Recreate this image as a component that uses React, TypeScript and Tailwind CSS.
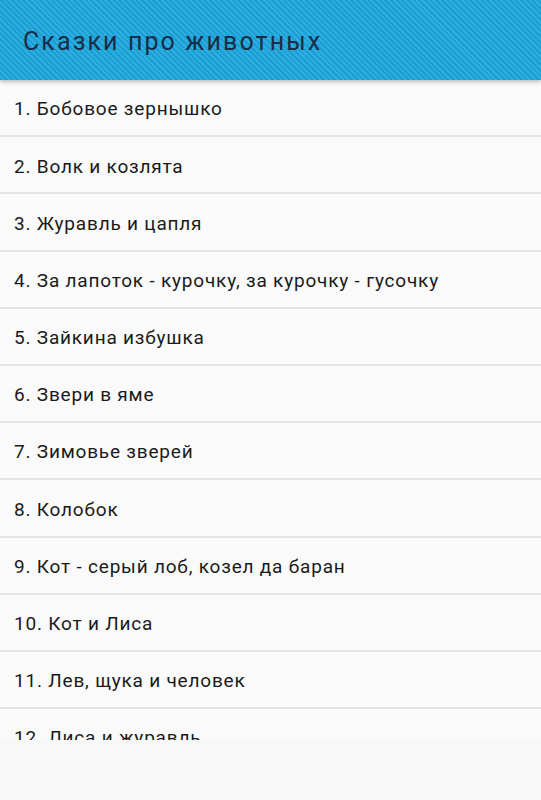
const TALES = [
  'Бобовое зернышко',
  'Волк и козлята',
  'Журавль и цапля',
  'За лапоток - курочку, за курочку - гусочку',
  'Зайкина избушка',
  'Звери в яме',
  'Зимовье зверей',
  'Колобок',
  'Кот - серый лоб, козел да баран',
  'Кот и Лиса',
  'Лев, щука и человек',
  'Лиса и журавль',
  'Лиса и кувшин',
];

export default function App() {
  return (
    <div className="w-[541px] h-[800px] bg-[#f8f8f8] flex flex-col font-['Roboto',sans-serif] overflow-hidden">
      <header className="relative z-10 h-[80px] shrink-0 flex items-center pl-[23px] pt-[3px] bg-[repeating-linear-gradient(45deg,#1b9fd3_0px,#1b9fd3_2px,#2eaee0_2px,#2eaee0_4px)] shadow-[0_2px_4px_rgba(0,0,0,0.25)]">
        <h1 className="text-[25px] tracking-[2.1px] text-[#172d48] leading-none">Сказки про животных</h1>
      </header>
      {/* list is clipped just above the bottom strip, like the app's ad space */}
      <ul className="h-[660px] overflow-hidden bg-[#fafafa]">
        {TALES.map((t, i) => (
          <li
            key={i}
            className="h-[57.2px] flex items-center pl-[14px] pt-[4px] border-b-2 border-[#e4e4e4] text-[19px] tracking-[0.8px] text-[#1a1a1a]"
          >
            {i + 1}. {t}
          </li>
        ))}
      </ul>
    </div>
  );
}
